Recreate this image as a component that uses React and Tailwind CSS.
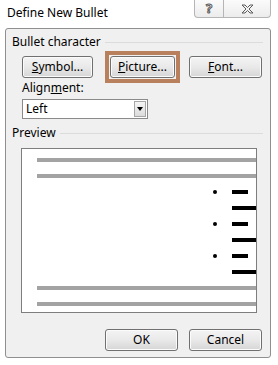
import React from "react";

const font = "font-['Noto_Sans','Liberation_Sans',sans-serif]";

const Btn = ({ children, className = "" }) => (
  <div
    className={`h-[22px] flex items-center justify-center rounded-[3px] border border-[#707070] bg-gradient-to-b from-[#f4f4f4] via-[#e9e9e9] to-[#d6d6d6] text-[12px] text-black shadow-[inset_0_0_0_1px_#fbfbfb] ${className}`}
  >
    {children}
  </div>
);

const GroupLabel = ({ children }) => (
  <div className="flex items-center h-[16px] pr-[7px]">
    <span className="text-[12px] leading-[16px] text-black">{children}</span>
    <div className="flex-1 ml-[4px] h-px bg-[#dcdcdc]" />
  </div>
);

const Gray = () => <div className="h-[4px] bg-[#a3a3a3]" />;

const BulletRow = ({ dot, long }) => (
  <div className="h-[4px] flex items-center justify-end">
    {dot && <div className="w-[4px] h-[4px] rounded-full bg-black mr-[15px]" />}
    <div className="w-[24px] flex">
      <div className={`h-[4px] bg-black ${long ? "w-[24px]" : "w-[16px]"}`} />
    </div>
  </div>
);

export default function App() {
  return (
    <div className={`w-[278px] h-[365px] bg-white flex flex-col ${font}`}>
      {/* Title bar */}
      <div className="h-[28px] flex items-start">
        <div className="pl-[7px] pt-[5px] text-[12px] leading-[16px] text-black flex-1">
          Define New Bullet
        </div>
        <div className="mr-[7px] flex h-[18px] border border-t-0 border-[#b5b5b5] rounded-b-[4px] bg-gradient-to-b from-[#fbfbfb] to-[#ececec]">
          <div className="w-[29px] flex items-center justify-center border-r border-[#b5b5b5]">
            <span className="text-[13px] font-bold leading-none text-transparent [-webkit-text-stroke:1px_#5c5c5c]">
              ?
            </span>
          </div>
          <div className="w-[46px] flex items-center justify-center">
            <svg width="13" height="10" viewBox="0 0 13 10">
              <path
                d="M1 1 H4 L6.5 3.5 L9 1 H12 L8 5 L12 9 H9 L6.5 6.5 L4 9 H1 L5 5 Z"
                fill="none"
                stroke="#5c5c5c"
                strokeWidth="1"
                strokeLinejoin="round"
              />
            </svg>
          </div>
        </div>
      </div>

      {/* Panel */}
      <div className="ml-[5px] mr-[7px] h-[330px] border border-[#8f8f8f] rounded-[3px] bg-[#f0f0f0] flex flex-col pl-[6px]">
        <div className="mt-[5px]">
          <GroupLabel>Bullet character</GroupLabel>
        </div>

        <div className="mt-[6px] flex pl-[10px]">
          <Btn className="w-[71px]">
            <span><span className="underline">S</span>ymbol...</span>
          </Btn>
          <div className="relative ml-[17px] w-[65px]">
            <Btn className="w-[65px] border-[#3c7fb1]">
              <span><span className="underline">P</span>icture...</span>
            </Btn>
            <div className="absolute -left-[5px] -top-[5px] w-[75px] h-[32px] border-[4px] border-[#b9805e] pointer-events-none" />
          </div>
          <Btn className="w-[73px] ml-[14px]">
            <span><span className="underline">F</span>ont...</span>
          </Btn>
        </div>

        <div className="mt-[2px] pl-[10px] text-[12px] leading-[16px] text-black">
          Align<span className="underline">m</span>ent:
        </div>

        <div className="mt-[3px] ml-[10px] w-[126px] h-[20px] border border-[#8a8a8a] bg-white flex items-center">
          <span className="flex-1 pl-[3px] text-[12px] leading-[16px] text-black">Left</span>
          <div className="w-[12px] h-[16px] mr-[1px] border border-[#a7a7a7] bg-gradient-to-b from-[#f5f5f5] to-[#dcdcdc] flex items-center justify-center">
            <div className="w-0 h-0 border-l-[3px] border-r-[3px] border-t-[4px] border-l-transparent border-r-transparent border-t-black" />
          </div>
        </div>

        <div className="mt-[6px]">
          <GroupLabel>Preview</GroupLabel>
        </div>

        <div className="mt-[7px] ml-[9px] w-[236px] h-[165px] border border-[#7e7e7e] bg-white pt-[9px] pl-[15px] flex flex-col gap-[12px]">
          <Gray />
          <Gray />
          <BulletRow dot />
          <BulletRow long />
          <BulletRow dot />
          <BulletRow long />
          <BulletRow dot />
          <BulletRow long />
          <Gray />
          <Gray />
        </div>

        <div className="mt-[16px] flex justify-end pr-[8px] gap-[11px]">
          <Btn className="w-[73px]">OK</Btn>
          <Btn className="w-[73px]">Cancel</Btn>
        </div>
      </div>
    </div>
  );
}
